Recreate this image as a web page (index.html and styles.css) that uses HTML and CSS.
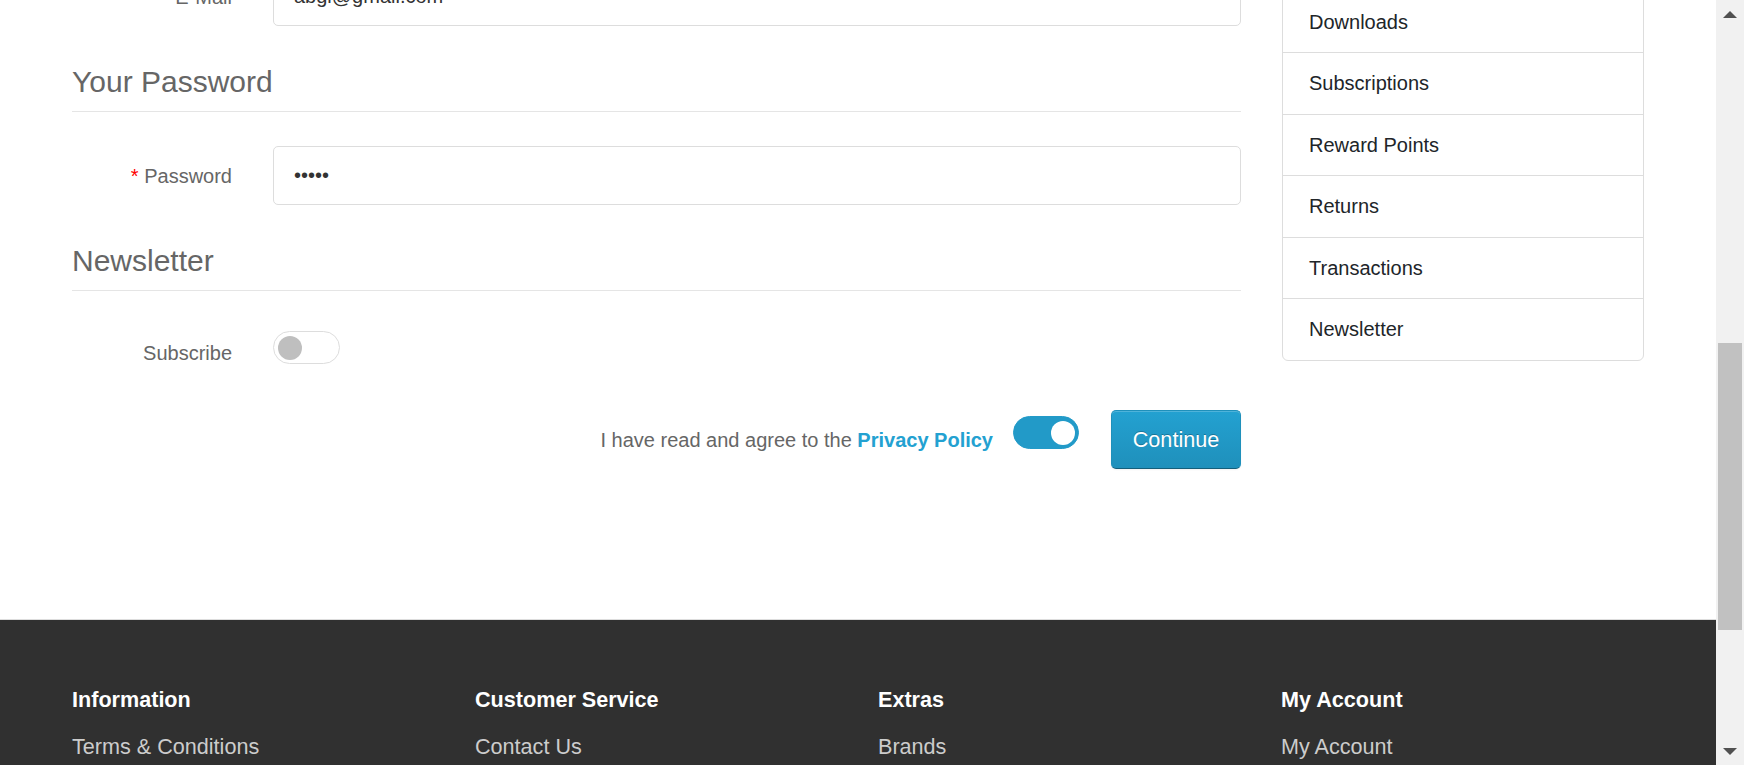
FILE: index.html
```html
<!DOCTYPE html>
<html lang="en">
<head>
<meta charset="utf-8">
<title>Register Account</title>
<link rel="stylesheet" href="styles.css">
</head>
<body>
<div class="window">
  <div class="viewport">
    <div class="page">
      <div class="container main">
        <div class="form">
          <h1 class="title">Register Account</h1>
          <p class="intro">If you already have an account with us, please login at the login page.</p>

          <div class="section">
            <div class="legend">Your Personal Details</div>
            <div class="rows">
              <div class="row">
                <div class="label"><span class="req">*</span> First Name</div>
                <input class="input" type="text" value="abg">
              </div>
              <div class="row">
                <div class="label"><span class="req">*</span> Last Name</div>
                <input class="input" type="text" value="abg">
              </div>
              <div class="row">
                <div class="label"><span class="req">*</span> E-Mail</div>
                <input class="input" type="text" value="abgl@gmail.com">
              </div>
            </div>
          </div>

          <div class="section">
            <div class="legend">Your Password</div>
            <div class="rows">
              <div class="row">
                <div class="label"><span class="req">*</span> Password</div>
                <input class="input" type="password" value="12345">
              </div>
            </div>
          </div>

          <div class="section">
            <div class="legend">Newsletter</div>
            <div class="rows">
              <div class="row row-switch">
                <div class="label">Subscribe</div>
                <div><span class="switch"><span class="knob"></span></span></div>
              </div>
            </div>
          </div>

          <div class="agree">
            <span class="agree-text">I have read and agree to the <a href="#">Privacy Policy</a></span>
            <span class="switch switch-on"><span class="knob"></span></span>
            <button class="btn" type="button">Continue</button>
          </div>
        </div>

        <ul class="side">
          <li>Login</li>
          <li>Register</li>
          <li>Forgotten Password</li>
          <li>My Account</li>
          <li>Address Book</li>
          <li>Wish List</li>
          <li>Order History</li>
          <li>Downloads</li>
          <li>Subscriptions</li>
          <li>Reward Points</li>
          <li>Returns</li>
          <li>Transactions</li>
          <li>Newsletter</li>
        </ul>
      </div>

      <footer class="footer">
        <div class="container footer-grid">
          <div>
            <h5>Information</h5>
            <ul><li>Terms &amp; Conditions</li><li>Delivery Information</li></ul>
          </div>
          <div>
            <h5>Customer Service</h5>
            <ul><li>Contact Us</li><li>Returns</li></ul>
          </div>
          <div>
            <h5>Extras</h5>
            <ul><li>Brands</li><li>Affiliate</li></ul>
          </div>
          <div>
            <h5>My Account</h5>
            <ul><li>My Account</li><li>Order History</li></ul>
          </div>
        </div>
      </footer>
    </div>
  </div>

  <div class="scrollbar">
    <div class="sb-btn"><span class="arrow-up"></span></div>
    <div class="sb-track"><div class="sb-thumb"></div></div>
    <div class="sb-btn"><span class="arrow-down"></span></div>
  </div>
</div>
</body>
</html>
```

FILE: styles.css
```css
* { box-sizing: border-box; }

html, body {
  margin: 0;
  height: 765px;
  overflow: hidden;
}

body {
  font-family: "Liberation Sans", Arial, sans-serif;
  font-size: 20px;
  line-height: 30px;
  color: #666;
  background: #fff;
}

.window {
  display: flex;
  height: 765px;
}

.viewport {
  flex: 1;
  min-width: 0;
  overflow: hidden;
}

/* page scrolled down */
.page {
  margin-top: -440px;
}

.container {
  width: 1572px;
  margin: 0 auto;
}

.main {
  display: grid;
  grid-template-columns: 1fr 362px;
  column-gap: 41px;
  align-items: start;
}

.title {
  font-size: 33px;
  line-height: 50px;
  margin: 0 0 20px;
  font-weight: normal;
  color: #444;
}

.intro {
  margin: 0;
  padding-bottom: 27px;
}

.section {
  margin-top: 38px;
}

.legend {
  font-size: 30px;
  line-height: 36px;
  padding-bottom: 11px;
  border-bottom: 1px solid #e5e5e5;
  margin-bottom: 34px;
  color: #666;
}

.rows {
  display: flex;
  flex-direction: column;
  gap: 21px;
}

.row {
  display: grid;
  grid-template-columns: 160px 1fr;
  column-gap: 41px;
  align-items: center;
}

.label {
  text-align: right;
  white-space: nowrap;
}

.req {
  color: #f00;
}

.input {
  display: block;
  width: 100%;
  height: 59px;
  border: 1px solid #ddd;
  border-radius: 5px;
  padding: 0 20px;
  font-family: "Liberation Sans", Arial, sans-serif;
  font-size: 20px;
  color: #333;
  background: #fff;
  outline: none;
}

.row-switch {
  align-items: start;
}

.row-switch .label {
  padding-top: 13px;
}

.switch {
  display: flex;
  align-items: center;
  width: 67px;
  height: 33px;
  border: 1px solid #ddd;
  border-radius: 17px;
  padding: 0 4px;
  margin-top: 6px;
  background: #fff;
}

.knob {
  display: block;
  width: 24px;
  height: 24px;
  border-radius: 50%;
  background: #bfbfbf;
}

.agree {
  display: flex;
  justify-content: flex-end;
  align-items: center;
  margin-top: 42px;
}

.agree-text {
  margin-right: 20px;
}

.agree-text a {
  color: #23a1d1;
  font-weight: bold;
  text-decoration: none;
}

.switch-on {
  width: 66px;
  margin: 0 32px 14px 0;
  padding: 0 3px;
  justify-content: flex-end;
  background: #229ac8;
  border-color: #229ac8;
}

.switch-on .knob {
  background: #fff;
}

.btn {
  width: 130px;
  height: 59px;
  padding: 0;
  font-family: "Liberation Sans", Arial, sans-serif;
  font-size: 21.6px;
  color: #fff;
  background: linear-gradient(to bottom, #23a1d1, #1f90bb);
  border: 1px solid;
  border-color: #1f90bb #1f90bb #145e7a;
  border-radius: 5px;
  text-shadow: 0 -1px 0 rgba(0, 0, 0, 0.25);
  box-shadow: inset 0 1px 0 rgba(255, 255, 255, 0.2), 0 1px 2px rgba(0, 0, 0, 0.05);
}

.side {
  list-style: none;
  margin: 0;
  padding: 0;
  border: 1px solid #ddd;
  border-radius: 6px;
}

.side li {
  padding: 15.25px 26px;
  line-height: 30px;
  color: #212529;
  border-bottom: 1px solid #ddd;
}

.side li:last-child {
  border-bottom: none;
}

.footer {
  margin-top: 150px;
  border-top: 1px solid #ddd;
  background: #303030;
  padding-top: 67px;
  height: 320px;
}

.footer-grid {
  display: grid;
  grid-template-columns: repeat(4, 1fr);
  column-gap: 40px;
}

.footer h5 {
  margin: 0 0 17.5px;
  font-size: 21.6px;
  line-height: 26px;
  font-weight: bold;
  color: #fff;
}

.footer ul {
  list-style: none;
  margin: 0;
  padding: 0;
}

.footer li {
  font-size: 21.6px;
  line-height: 32.4px;
  color: #ccc;
}

.scrollbar {
  width: 28px;
  flex: 0 0 28px;
  background: #f1f1f1;
  display: flex;
  flex-direction: column;
}

.sb-btn {
  height: 28px;
  display: flex;
  align-items: center;
  justify-content: center;
}

.sb-track {
  flex: 1;
  padding: 0 2px;
}

.sb-thumb {
  margin-top: 315px;
  height: 287px;
  background: #c1c1c1;
}

.arrow-up {
  width: 0;
  height: 0;
  border-left: 7px solid transparent;
  border-right: 7px solid transparent;
  border-bottom: 7px solid #505050;
}

.arrow-down {
  width: 0;
  height: 0;
  border-left: 7px solid transparent;
  border-right: 7px solid transparent;
  border-top: 7px solid #505050;
}
```
